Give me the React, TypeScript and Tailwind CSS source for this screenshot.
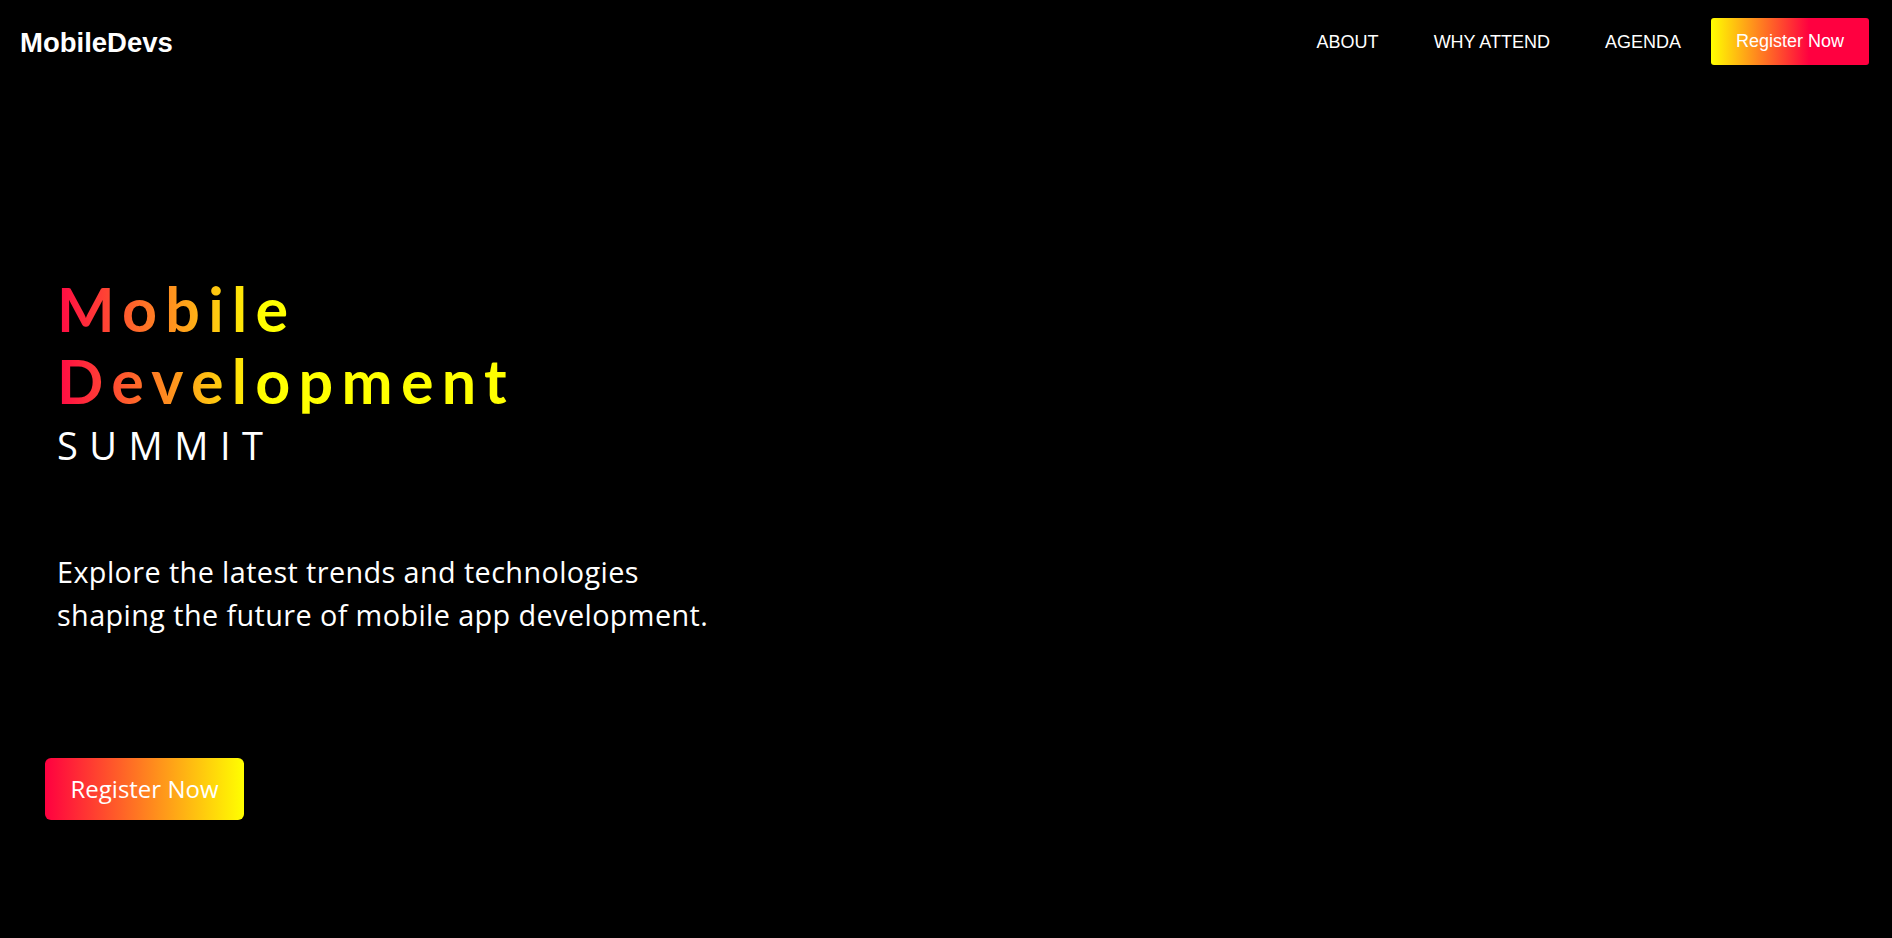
import React from "react";

export default function App() {
  return (
    <div className="min-h-screen w-full bg-black text-white">
      <header className="flex h-[83px] items-center justify-between pl-[20px] pr-[23px]">
        <div className="mt-[2px] text-[27.5px] font-bold leading-none text-white [font-family:'Liberation_Sans',Arial,sans-serif]">
          MobileDevs
        </div>
        <nav className="flex items-center text-[18px] [font-family:'Liberation_Sans',Arial,sans-serif]">
          <a href="#about" className="mt-[2px] text-white">ABOUT</a>
          <a href="#why" className="ml-[55px] mt-[2px] text-white">WHY ATTEND</a>
          <a href="#agenda" className="ml-[55px] mt-[2px] text-white">AGENDA</a>
          <button className="ml-[30px] flex h-[47px] w-[158px] items-center justify-center rounded-[3px] bg-[linear-gradient(90deg,#ffff00_0%,#ff0040_62%)] text-[18px] text-white">
            Register Now
          </button>
        </nav>
      </header>

      <main className="pl-[57px] pt-[190px]">
        <h1 className="w-fit bg-[linear-gradient(90deg,#ff0844_0px,#ffff00_205px)] bg-clip-text text-[61px] font-bold leading-[72px] tracking-[8.3px] text-transparent [font-family:Lato,'Noto_Sans',sans-serif]">
          Mobile
          <br />
          Development
        </h1>
        <div className="mt-[5px] text-[38px] leading-[46px] tracking-[11.5px] text-white [font-family:'Open_Sans','Noto_Sans',sans-serif]">
          SUMMIT
        </div>
        <p className="mt-[82px] text-[28.8px] leading-[43.2px] tracking-[0.4px] text-white [font-family:'Open_Sans','Noto_Sans',sans-serif]">
          Explore the latest trends and technologies
          <br />
          shaping the future of mobile app development.
        </p>
        <button className="ml-[-12px] mt-[122px] flex h-[62px] w-[199px] items-center justify-center rounded-[6px] bg-[linear-gradient(90deg,#ff0040,#ffff00)] text-[24px] text-white [font-family:'Open_Sans','Noto_Sans',sans-serif]">
          Register Now
        </button>
      </main>
    </div>
  );
}
